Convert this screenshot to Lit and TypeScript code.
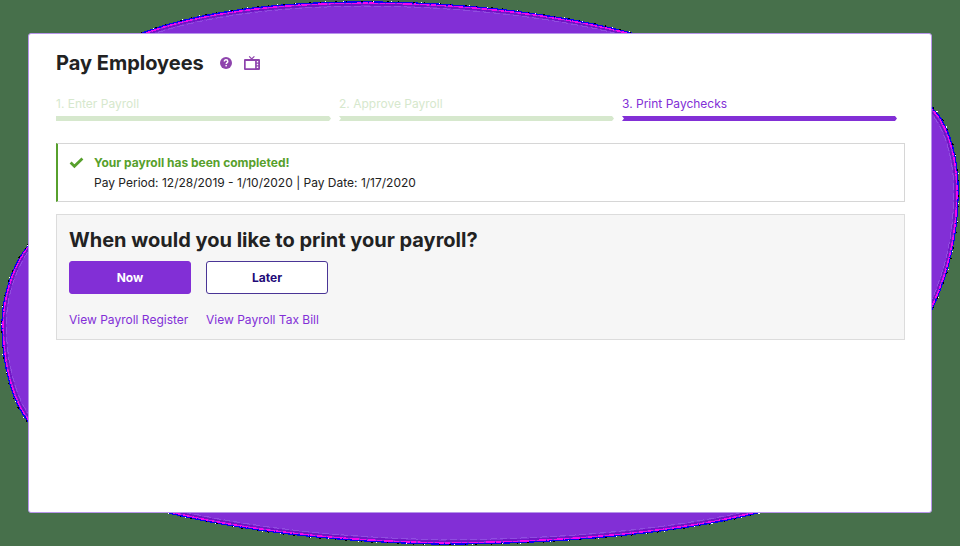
import { LitElement, html, css } from "lit";
import { customElement, property } from "lit/decorators.js";
import { classMap } from "lit/directives/class-map.js";

interface Step {
  label: string;
  current: boolean;
}

@customElement("backdrop-blob")
export class BackdropBlob extends LitElement {
  static styles = css`
    :host {
      display: block;
    }
    .art {
      display: block;
      width: 100%;
      height: 100%;
    }
  `;

  render() {
    const outline =
      "M28 246 C50 190 80 70 142 33 C205 10 285 2 365 2 C460 2 555 13 631 33 L932 108 C946 120 957 150 958 185 C959 235 948 275 932 309 C900 380 850 480 757 513 C680 533 560 544 440 544 C340 542 250 532 169 513 L28 421 C14 405 2 368 2 325 C2 296 13 264 28 246 Z";
    return html`
      <svg class="art" viewBox="0 0 960 546" preserveAspectRatio="none" aria-hidden="true" shape-rendering="crispEdges">
        <path d=${outline} fill="#822fd6" stroke="#0a00f0" stroke-width="1.5" />
        <path d=${outline} fill="none" stroke="#f305ee" stroke-width="1.5" stroke-dasharray="9 2 5 1" transform="translate(480 273) scale(.9975 .9955) translate(-480 -273)" />
        <path d=${outline} fill="none" stroke="#7115c4" stroke-width="1.5" transform="translate(480 273) scale(.994 .99) translate(-480 -273)" />
        <path d=${outline} fill="none" stroke="#8f4fdf" stroke-width="1" stroke-dasharray="7 3" transform="translate(480 273) scale(.991 .984) translate(-480 -273)" />
        <path d=${outline} fill="none" stroke="#000" stroke-width="1" stroke-dasharray="2 9 1 14" transform="translate(480 273) scale(1.002 1.003) translate(-480 -273)" />
        <path d=${outline} fill="none" stroke="#fff" stroke-width="1" stroke-dasharray="1 17 1 29" transform="translate(480 273) scale(1.002 1.003) translate(-480 -273)" />
      </svg>
    `;
  }
}

@customElement("step-tracker")
export class StepTracker extends LitElement {
  @property({ attribute: false }) steps: Step[] = [];

  static styles = css`
    :host {
      display: block;
    }
    .steps {
      display: grid;
      grid-template-columns: repeat(3, 1fr);
      gap: 8px;
      margin: 0;
      padding: 0 8px 0 0;
      list-style: none;
    }
    .step {
      color: #d6e8cd;
      font-size: 12px;
      line-height: 16px;
    }
    .step::after {
      content: "";
      display: block;
      height: 5px;
      margin-top: 4px;
      background: currentColor;
      clip-path: polygon(0 0, calc(100% - 2px) 0, 100% 50%, calc(100% - 2px) 100%, 0 100%, 2px 50%);
    }
    .step:first-child::after {
      clip-path: polygon(0 0, calc(100% - 2px) 0, 100% 50%, calc(100% - 2px) 100%, 0 100%);
    }
    .current {
      color: #822fd6;
    }
  `;

  render() {
    return html`
      <ol class="steps">
        ${this.steps.map(
          (step, i) => html`
            <li class=${classMap({ step: true, current: step.current })} aria-current=${step.current ? "step" : "false"}>${i + 1}. ${step.label}</li>
          `
        )}
      </ol>
    `;
  }
}

@customElement("app-root")
export class AppRoot extends LitElement {
  private steps: Step[] = [
    { label: "Enter Payroll", current: false },
    { label: "Approve Payroll", current: false },
    { label: "Print Paychecks", current: true },
  ];

  static styles = css`
    :host {
      display: block;
      position: relative;
      box-sizing: border-box;
      min-height: 100vh;
      padding: 33px 28px;
      background: #47704b;
      color: #222;
      font: 12px/16px Inter, "Liberation Sans", sans-serif;
    }
    .blob {
      position: absolute;
      inset: 0;
    }
    .card {
      position: relative;
      box-sizing: border-box;
      min-height: calc(100vh - 66px);
      padding: 16px 26px 16px 27px;
      border: 1px solid #b795ea;
      border-radius: 3px;
      background: #fff;
    }
    .head {
      display: flex;
      align-items: center;
      gap: 12px;
      margin-bottom: 20px;
    }
    .title {
      margin: 0 4px 0 0;
      font-size: 20px;
      line-height: 26px;
      font-weight: 700;
    }
    .icon-button {
      display: flex;
      padding: 0;
      border: 0;
      background: none;
      color: #8e44ad;
    }
    .notice {
      display: flex;
      gap: 10px;
      margin-top: 22px;
      padding: 11px 11px 10px;
      border: 1px solid #d6d6d6;
      border-left: 2px solid #57a02c;
    }
    .check {
      flex: none;
      margin-top: 2px;
    }
    .notice-title {
      margin: 0 0 4px;
      color: #57a02c;
      font-weight: 700;
    }
    .notice-text {
      margin: 0;
    }
    .panel {
      margin-top: 12px;
      padding: 12px 12px 11px;
      border: 1px solid #dcdcdc;
      background: #f6f6f6;
    }
    .question {
      margin: 0 0 8px;
      font-size: 20px;
      line-height: 26px;
      font-weight: 700;
    }
    .choices {
      display: grid;
      grid-template-columns: repeat(2, 122px);
      gap: 18px 15px;
    }
    .choice {
      height: 33px;
      border: 1px solid #4a3596;
      border-radius: 3px;
      background: #fff;
      color: #220a78;
      font: inherit;
      font-weight: 700;
    }
    .primary {
      border-color: #822fd6;
      background: #822fd6;
      color: #fff;
    }
    .link {
      color: #822fd6;
      text-decoration: none;
      white-space: nowrap;
    }
  `;

  render() {
    return html`
      <backdrop-blob class="blob"></backdrop-blob>
      <main class="card">
        <header class="head">
          <h1 class="title">Pay Employees</h1>
          <button class="icon-button" type="button" aria-label="Help">
            <svg width="12" height="12" viewBox="0 0 12 12">
              <circle cx="6" cy="6" r="6" fill="currentColor" />
              <path d="M4.3 4.6C4.3 3.4 5 2.8 6 2.8s1.8.6 1.8 1.6c0 1.2-1.6 1.3-1.6 2.6" fill="none" stroke="#fff" stroke-width="1.4" />
              <rect x="5.4" y="7.9" width="1.5" height="1.5" fill="#fff" />
            </svg>
          </button>
          <button class="icon-button" type="button" aria-label="Watch video">
            <svg width="16" height="15" viewBox="0 0 16 15">
              <path fill="currentColor" fill-rule="evenodd" d="M1 3h14q1 0 1 1v9q0 1-1 1H1q-1 0-1-1V4q0-1 1-1zM1.700 4.900v7.400h9.400V4.900zM12.800 5v1.400h1.400V5zM12.800 7.800v1.400h1.400V7.800zM12.800 10.600V12h1.400v-1.400z" />
              <path d="M5.200.4 7.700 3 10.400.4" fill="none" stroke="currentColor" stroke-width="1.200" />
            </svg>
          </button>
        </header>
        <step-tracker .steps=${this.steps}></step-tracker>
        <section class="notice" role="status">
          <svg class="check" width="15" height="12" viewBox="0 0 15 12" aria-hidden="true">
            <path d="M1.600 5.600 5.400 9.200 13.400 1.500" fill="none" stroke="#57a02c" stroke-width="2.800" />
          </svg>
          <div>
            <p class="notice-title">Your payroll has been completed!</p>
            <p class="notice-text">Pay Period: 12/28/2019 - 1/10/2020 | Pay Date: 1/17/2020</p>
          </div>
        </section>
        <section class="panel">
          <h2 class="question">When would you like to print your payroll?</h2>
          <div class="choices">
            <button class="choice primary" type="button">Now</button>
            <button class="choice" type="button">Later</button>
            <a class="link" href="#register">View Payroll Register</a>
            <a class="link" href="#tax-bill">View Payroll Tax Bill</a>
          </div>
        </section>
      </main>
    `;
  }
}
